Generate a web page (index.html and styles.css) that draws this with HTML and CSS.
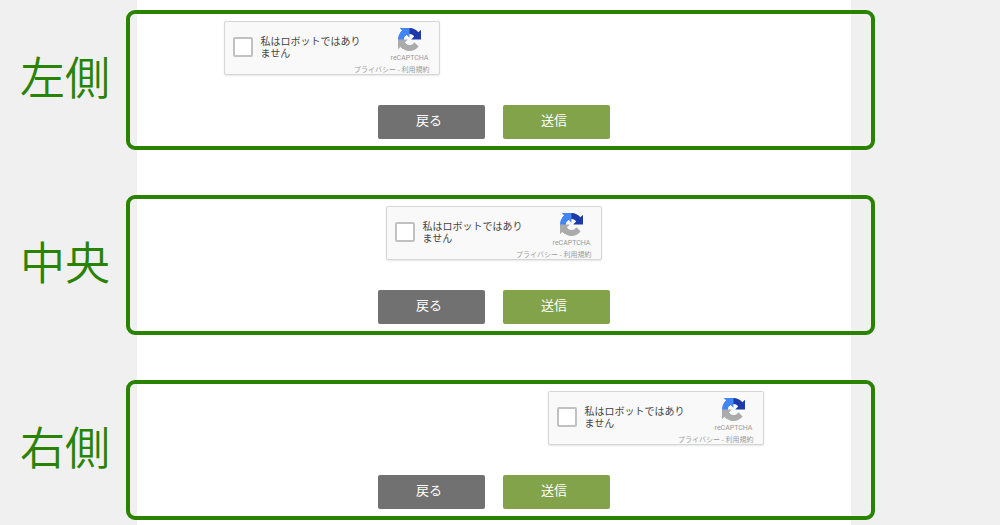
FILE: index.html
```
<!DOCTYPE html>
<html lang="ja">
<head>
  <meta charset="UTF-8">
  <meta name="viewport" content="width=device-width, initial-scale=1">
  <title>reCAPTCHA 表示位置</title>
  <link rel="stylesheet" href="styles.css">
</head>
<body>
  <!-- shared logo -->
  <svg class="sprite" width="0" height="0" aria-hidden="true">
    <symbol id="recaptcha-logo" viewBox="0 0 64 64">
      <path fill="#1c3aa9" d="M64 31.955l-.033-1.37V4.687l-7.16 7.16C50.948 4.674 42.033.093 32.05.093c-10.4 0-19.622 4.96-25.458 12.64l11.736 11.86a15.55 15.55 0 0 1 4.754-5.334c2.05-1.6 4.952-2.906 8.968-2.906.485 0 .86.057 1.135.163 4.976.393 9.288 3.14 11.828 7.124l-8.307 8.307L64 31.953"/>
      <path fill="#4285f4" d="M31.862.094l-1.37.033H4.594l7.16 7.16C4.58 13.147 0 22.06 0 32.046c0 10.4 4.96 19.622 12.64 25.458L24.5 45.768a15.55 15.55 0 0 1-5.334-4.754c-1.6-2.05-2.906-4.952-2.906-8.968 0-.485.057-.86.163-1.135.393-4.976 3.14-9.288 7.124-11.828l8.307 8.307L31.86.095"/>
      <path fill="#ababab" d="M.001 32.045l.033 1.37v25.898l7.16-7.16c5.86 7.173 14.774 11.754 24.76 11.754 10.4 0 19.622-4.96 25.458-12.64l-11.736-11.86a15.55 15.55 0 0 1-4.754 5.334c-2.05 1.6-4.952 2.906-8.968 2.906-.485 0-.86-.057-1.135-.163-4.976-.393-9.288-3.14-11.828-7.124l8.307-8.307c-10.522.04-22.4.066-27.295-.005"/>
    </symbol>
  </svg>

  <main class="page">
    <section class="row">
      <h2 class="row-title">左側</h2>
      <div class="frame">
        <form class="form">
          <div class="captcha captcha-left">
            <input class="captcha-check" type="checkbox" id="robot1">
            <label class="captcha-label" for="robot1">私はロボットではありません</label>
            <div class="captcha-brand">
              <svg class="captcha-logo"><use href="#recaptcha-logo"/></svg>
              <span>reCAPTCHA</span>
            </div>
            <div class="captcha-links"><a href="#">プライバシー</a> - <a href="#">利用規約</a></div>
          </div>
          <div class="buttons">
            <button type="button" class="btn btn-back">戻る</button>
            <button type="button" class="btn btn-send">送信</button>
          </div>
        </form>
      </div>
    </section>

    <section class="row">
      <h2 class="row-title">中央</h2>
      <div class="frame">
        <form class="form">
          <div class="captcha captcha-center">
            <input class="captcha-check" type="checkbox" id="robot2">
            <label class="captcha-label" for="robot2">私はロボットではありません</label>
            <div class="captcha-brand">
              <svg class="captcha-logo"><use href="#recaptcha-logo"/></svg>
              <span>reCAPTCHA</span>
            </div>
            <div class="captcha-links"><a href="#">プライバシー</a> - <a href="#">利用規約</a></div>
          </div>
          <div class="buttons">
            <button type="button" class="btn btn-back">戻る</button>
            <button type="button" class="btn btn-send">送信</button>
          </div>
        </form>
      </div>
    </section>

    <section class="row">
      <h2 class="row-title">右側</h2>
      <div class="frame">
        <form class="form">
          <div class="captcha captcha-right">
            <input class="captcha-check" type="checkbox" id="robot3">
            <label class="captcha-label" for="robot3">私はロボットではありません</label>
            <div class="captcha-brand">
              <svg class="captcha-logo"><use href="#recaptcha-logo"/></svg>
              <span>reCAPTCHA</span>
            </div>
            <div class="captcha-links"><a href="#">プライバシー</a> - <a href="#">利用規約</a></div>
          </div>
          <div class="buttons">
            <button type="button" class="btn btn-back">戻る</button>
            <button type="button" class="btn btn-send">送信</button>
          </div>
        </form>
      </div>
    </section>
  </main>
</body>
</html>
```

FILE: styles.css
```
:root {
  --page-bg: #f0f0f0;
  --frame-color: #298200;
  --back-bg: #717171;
  --send-bg: #82a34a;
}

* {
  box-sizing: border-box;
}

body {
  margin: 0;
  font-family: "Noto Sans CJK JP", sans-serif;
  background: var(--page-bg);
}

.sprite {
  display: block;
}

/* white content column behind the rows */
.page {
  display: flex;
  flex-direction: column;
  gap: 45px;
  min-height: 100vh;
  padding: 10px 0 5px;
  background: linear-gradient(to right, var(--page-bg) 13.7%, #fff 13.7%, #fff 85.1%, var(--page-bg) 85.1%);
}

.row {
  display: grid;
  grid-template-columns: 12.6% 74.9%;
}

.row-title {
  align-self: center;
  margin: 0;
  padding: 0 16px 8px 0;
  text-align: right;
  white-space: nowrap;
  font-size: 45px;
  line-height: 60px;
  font-weight: 350;
  color: var(--frame-color);
}

.frame {
  padding: 7px 14px 7px 0;
  border: 4px solid var(--frame-color);
  border-radius: 9px;
}

.form {
  display: flex;
  flex-direction: column;
  gap: 30px;
  max-width: 540px;
  margin: 0 auto;
}

.captcha {
  display: grid;
  grid-template-columns: 20px 1fr 40px;
  grid-template-rows: 40px 9px;
  column-gap: 8px;
  width: 216px;
  height: 54px;
  padding: 1px 9px 0 8px;
  border: 1px solid #d6d6d6;
  border-radius: 2px;
  background: #f9f9f9;
  box-shadow: 0 1px 2px rgba(0, 0, 0, 0.1);
}

.captcha-left {
  align-self: flex-start;
}

.captcha-center {
  align-self: center;
}

.captcha-right {
  align-self: flex-end;
}

.captcha-check {
  appearance: none;
  align-self: end;
  width: 20px;
  height: 20px;
  margin: 0 0 6px;
  border: 2px solid #c1c1c1;
  border-radius: 2px;
  background: #fff;
  cursor: pointer;
}

.captcha-check:checked {
  background: var(--send-bg);
}

.captcha-label {
  align-self: end;
  width: 102px;
  padding-bottom: 4px;
  font-size: 10px;
  line-height: 12px;
  color: #444;
}

.captcha-brand {
  display: flex;
  flex-direction: column;
  align-items: center;
  justify-content: flex-end;
  font-family: Roboto, sans-serif;
  font-size: 7px;
  line-height: 10px;
  color: #999;
}

.captcha-logo {
  width: 23px;
  height: 23px;
  margin-bottom: 2px;
}

.captcha-links {
  grid-column: 1 / -1;
  text-align: right;
  font-size: 7px;
  line-height: 12px;
  color: #999;
}

.captcha-links a {
  color: inherit;
  text-decoration: none;
}

.buttons {
  display: flex;
  justify-content: center;
  gap: 18px;
}

.btn {
  width: 107px;
  height: 34px;
  padding: 0 4px 5px 0;
  border: none;
  border-radius: 2px;
  font-family: inherit;
  font-size: 13px;
  color: #fff;
  cursor: pointer;
}

.btn-back {
  background: var(--back-bg);
}

.btn-send {
  background: var(--send-bg);
}

.btn:hover {
  opacity: 0.85;
}
```
